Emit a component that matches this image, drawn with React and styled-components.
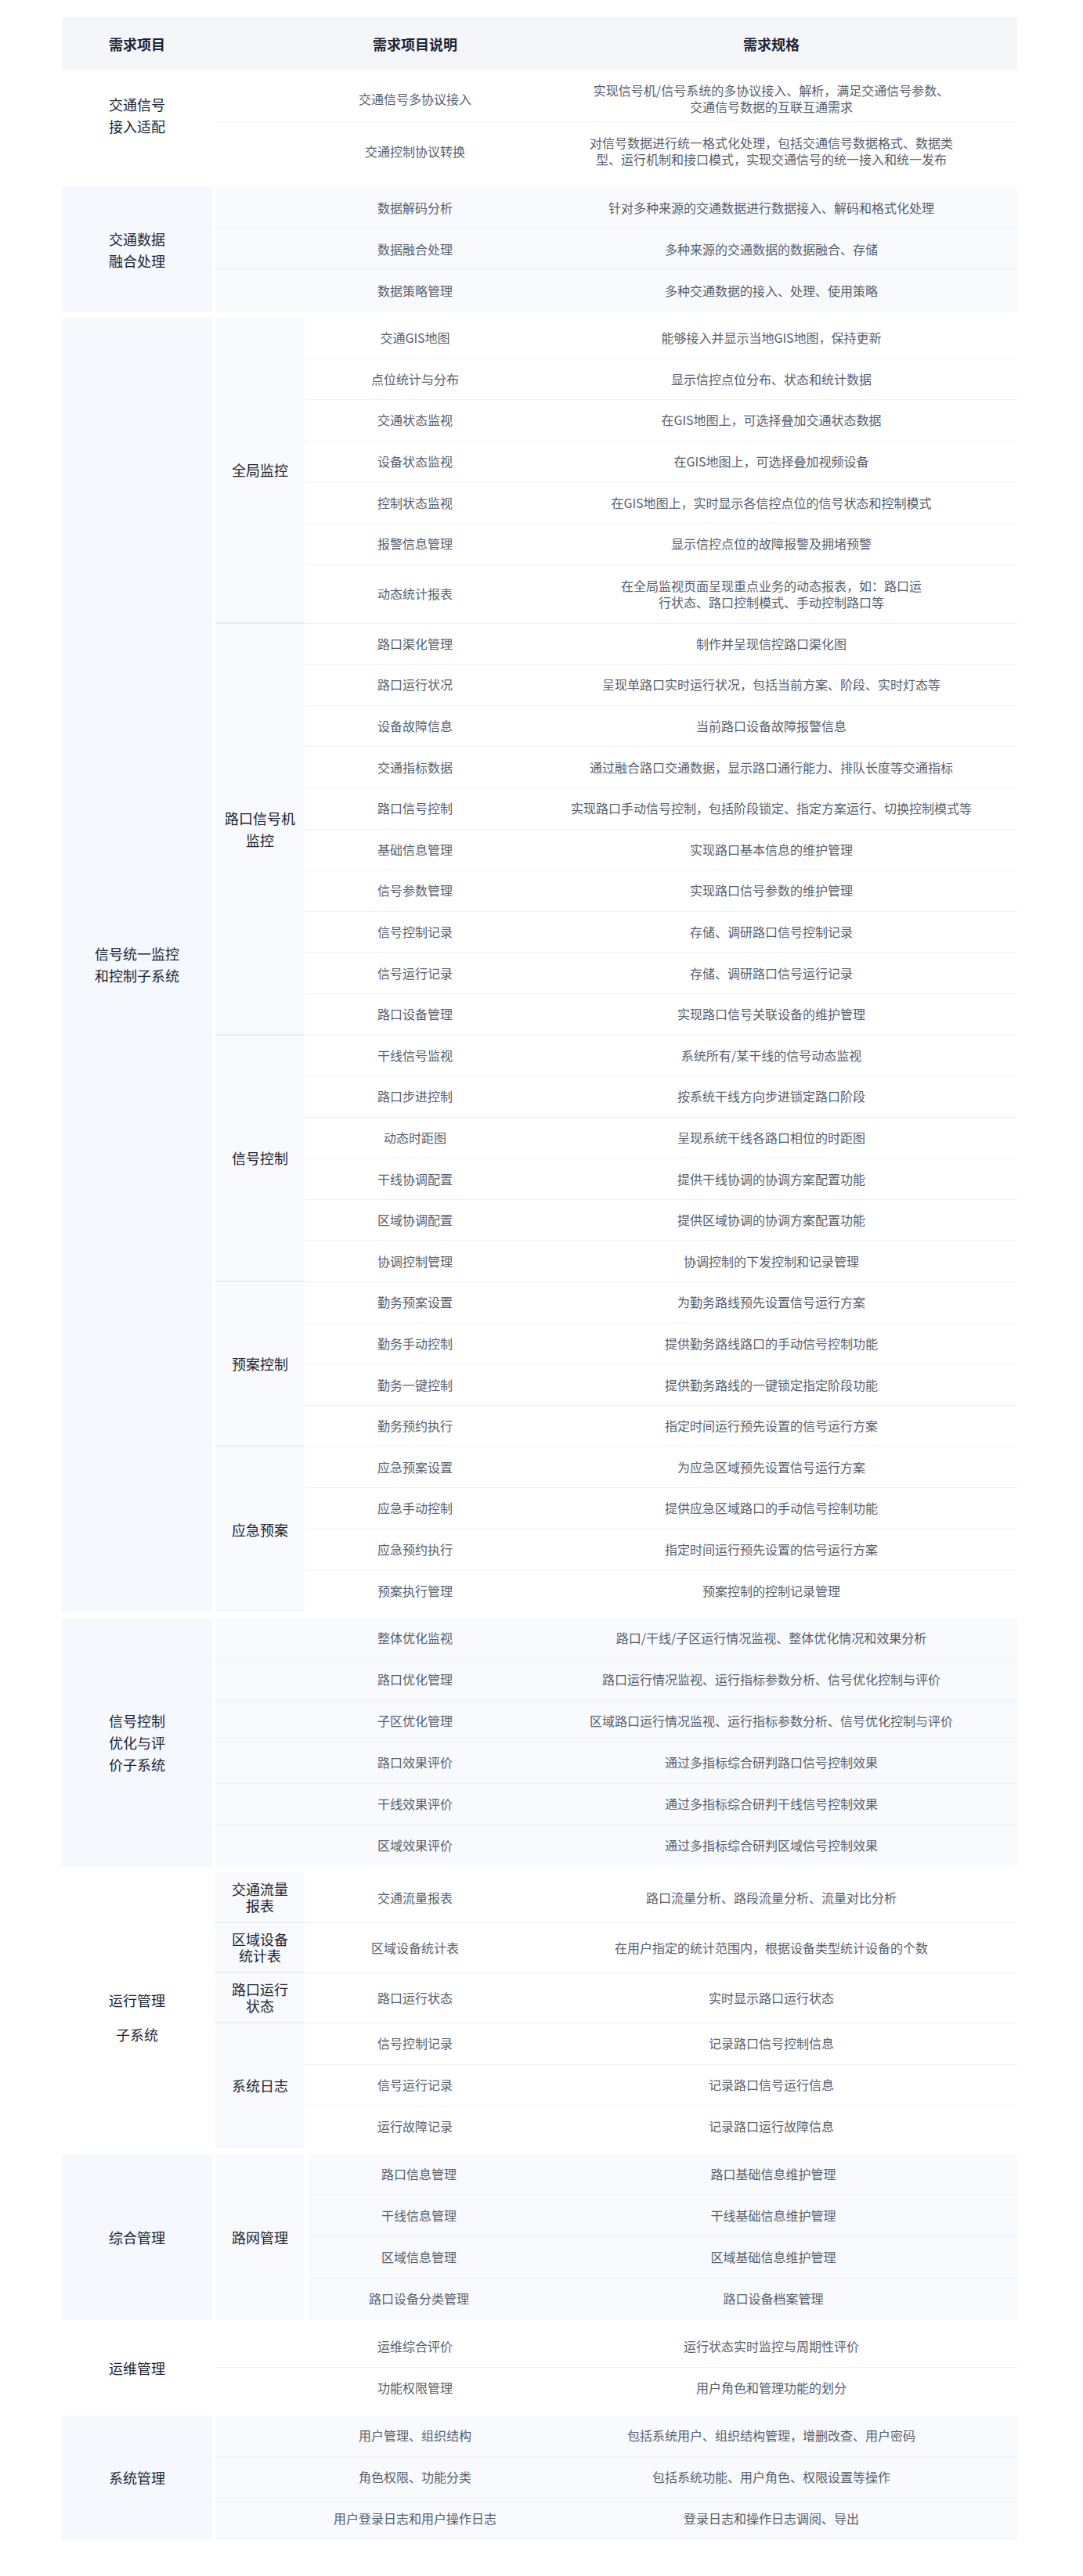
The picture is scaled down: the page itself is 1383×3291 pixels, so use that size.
import React from 'react'
import styled, { createGlobalStyle } from 'styled-components'

const sections = [
  {
    label: ['交通信号', '接入适配'],
    lift: true,
    groups: [{
      rows: [
        ['交通信号多协议接入', '实现信号机/信号系统的多协议接入、解析，满足交通信号参数、\n交通信号数据的互联互通需求'],
        ['交通控制协议转换', '对信号数据进行统一格式化处理，包括交通信号数据格式、数据类\n型、运行机制和接口模式，实现交通信号的统一接入和统一发布', true],
      ],
    }],
  },
  {
    label: ['交通数据', '融合处理'],
    tint: true,
    groups: [{
      rows: [
        ['数据解码分析', '针对多种来源的交通数据进行数据接入、解码和格式化处理'],
        ['数据融合处理', '多种来源的交通数据的数据融合、存储'],
        ['数据策略管理', '多种交通数据的接入、处理、使用策略'],
      ],
    }],
  },
  {
    label: ['信号统一监控', '和控制子系统'],
    labelTint: true,
    dense: true,
    groups: [
      {
        title: ['全局监控'],
        rows: [
          ['交通GIS地图', '能够接入并显示当地GIS地图，保持更新'],
          ['点位统计与分布', '显示信控点位分布、状态和统计数据'],
          ['交通状态监视', '在GIS地图上，可选择叠加交通状态数据'],
          ['设备状态监视', '在GIS地图上，可选择叠加视频设备'],
          ['控制状态监视', '在GIS地图上，实时显示各信控点位的信号状态和控制模式'],
          ['报警信息管理', '显示信控点位的故障报警及拥堵预警'],
          ['动态统计报表', '在全局监视页面呈现重点业务的动态报表，如：路口运\n行状态、路口控制模式、手动控制路口等', true],
        ],
      },
      {
        title: ['路口信号机', '监控'],
        rows: [
          ['路口渠化管理', '制作并呈现信控路口渠化图'],
          ['路口运行状况', '呈现单路口实时运行状况，包括当前方案、阶段、实时灯态等'],
          ['设备故障信息', '当前路口设备故障报警信息'],
          ['交通指标数据', '通过融合路口交通数据，显示路口通行能力、排队长度等交通指标'],
          ['路口信号控制', '实现路口手动信号控制，包括阶段锁定、指定方案运行、切换控制模式等'],
          ['基础信息管理', '实现路口基本信息的维护管理'],
          ['信号参数管理', '实现路口信号参数的维护管理'],
          ['信号控制记录', '存储、调研路口信号控制记录'],
          ['信号运行记录', '存储、调研路口信号运行记录'],
          ['路口设备管理', '实现路口信号关联设备的维护管理'],
        ],
      },
      {
        title: ['信号控制'],
        rows: [
          ['干线信号监视', '系统所有/某干线的信号动态监视'],
          ['路口步进控制', '按系统干线方向步进锁定路口阶段'],
          ['动态时距图', '呈现系统干线各路口相位的时距图'],
          ['干线协调配置', '提供干线协调的协调方案配置功能'],
          ['区域协调配置', '提供区域协调的协调方案配置功能'],
          ['协调控制管理', '协调控制的下发控制和记录管理'],
        ],
      },
      {
        title: ['预案控制'],
        rows: [
          ['勤务预案设置', '为勤务路线预先设置信号运行方案'],
          ['勤务手动控制', '提供勤务路线路口的手动信号控制功能'],
          ['勤务一键控制', '提供勤务路线的一键锁定指定阶段功能'],
          ['勤务预约执行', '指定时间运行预先设置的信号运行方案'],
        ],
      },
      {
        title: ['应急预案'],
        rows: [
          ['应急预案设置', '为应急区域预先设置信号运行方案'],
          ['应急手动控制', '提供应急区域路口的手动信号控制功能'],
          ['应急预约执行', '指定时间运行预先设置的信号运行方案'],
          ['预案执行管理', '预案控制的控制记录管理'],
        ],
      },
    ],
  },
  {
    label: ['信号控制', '优化与评', '价子系统'],
    tint: true,
    groups: [{
      rows: [
        ['整体优化监视', '路口/干线/子区运行情况监视、整体优化情况和效果分析'],
        ['路口优化管理', '路口运行情况监视、运行指标参数分析、信号优化控制与评价'],
        ['子区优化管理', '区域路口运行情况监视、运行指标参数分析、信号优化控制与评价'],
        ['路口效果评价', '通过多指标综合研判路口信号控制效果'],
        ['干线效果评价', '通过多指标综合研判干线信号控制效果'],
        ['区域效果评价', '通过多指标综合研判区域信号控制效果'],
      ],
    }],
  },
  {
    label: ['运行管理', '子系统'],
    spread: true,
    groups: [
      { title: ['交通流量', '报表'], tight: true, rows: [['交通流量报表', '路口流量分析、路段流量分析、流量对比分析']] },
      { title: ['区域设备', '统计表'], tight: true, rows: [['区域设备统计表', '在用户指定的统计范围内，根据设备类型统计设备的个数']] },
      { title: ['路口运行', '状态'], tight: true, rows: [['路口运行状态', '实时显示路口运行状态']] },
      {
        title: ['系统日志'],
        rows: [
          ['信号控制记录', '记录路口信号控制信息'],
          ['信号运行记录', '记录路口信号运行信息'],
          ['运行故障记录', '记录路口运行故障信息'],
        ],
      },
    ],
  },
  {
    label: ['综合管理'],
    tint: true,
    split: true,
    groups: [{
      title: ['路网管理'],
      rows: [
        ['路口信息管理', '路口基础信息维护管理'],
        ['干线信息管理', '干线基础信息维护管理'],
        ['区域信息管理', '区域基础信息维护管理'],
        ['路口设备分类管理', '路口设备档案管理'],
      ],
    }],
  },
  {
    label: ['运维管理'],
    groups: [{
      rows: [
        ['运维综合评价', '运行状态实时监控与周期性评价'],
        ['功能权限管理', '用户角色和管理功能的划分'],
      ],
    }],
  },
  {
    label: ['系统管理'],
    tint: true,
    groups: [{
      rows: [
        ['用户管理、组织结构', '包括系统用户、组织结构管理，增删改查、用户密码'],
        ['角色权限、功能分类', '包括系统功能、用户角色、权限设置等操作'],
        ['用户登录日志和用户操作日志', '登录日志和操作日志调阅、导出'],
      ],
    }],
  },
]

function App() {
  return (
    <>
      <GlobalStyle />
      <Table>
        <Head>
          <HeadCell $col={1}>需求项目</HeadCell>
          <HeadCell $col={3}>需求项目说明</HeadCell>
          <HeadCell $col={4}>需求规格</HeadCell>
        </Head>
        {sections.map((s, si) =>
          <Section key={si}>
            <Label $tint={s.tint || s.labelTint} $lift={s.lift} $spread={s.spread}>
              {s.label.map(l => <span key={l}>{l}</span>)}
            </Label>
            <Body>
              {s.groups.map((g, gi) => {
                const lastGroup = gi === s.groups.length - 1
                return (
                  <Group key={gi}>
                    {g.title &&
                      <SubLabel $last={lastGroup} $tight={g.tight} $split={s.split}>
                        {g.title.map(t => <span key={t}>{t}</span>)}
                      </SubLabel>
                    }
                    <Rows>
                      {g.rows.map((r, ri) =>
                        <Row
                          key={r[0]}
                          $tint={s.tint}
                          $tall={r[2]}
                          $dense={s.dense}
                          $offset={!g.title}
                          $last={lastGroup && ri === g.rows.length - 1}
                        >
                          <Cell>{r[0]}</Cell>
                          <Cell>{r[1]}</Cell>
                        </Row>
                      )}
                    </Rows>
                  </Group>
                )
              })}
            </Body>
          </Section>
        )}
      </Table>
    </>
  )
}

const GlobalStyle = createGlobalStyle`
*, *::before, *::after {
  box-sizing: border-box;
}
body {
  margin: 0;
  background: #fff;
  font-family: "Noto Sans CJK SC", "Noto Sans", sans-serif;
}
`

const Table = styled.div`
width: 1220px;
margin: 22px 0 48px 79px;
`

const Head = styled.div`
display: grid;
grid-template-columns: 192px 118px 282px 1fr;
align-items: center;
height: 67px;
background: #f4f6f9;
color: #1d2533;
font-size: 18px;
font-weight: 600;
`

const HeadCell = styled.div`
grid-column: ${({ $col }) => $col};
text-align: center;
`

const Section = styled.section`
display: flex;
margin-top: 8px;
`

const Label = styled.div`
width: 192px;
flex-shrink: 0;
display: flex;
flex-direction: column;
align-items: center;
justify-content: center;
padding-top: ${({ $spread }) => $spread ? 18 : 0}px;
padding-bottom: ${({ $lift }) => $lift ? 34 : 0}px;
background: ${({ $tint }) => $tint ? '#f5f8fc' : '#fff'};
color: #1d2533;
font-size: 18px;
line-height: ${({ $spread }) => $spread ? 44 : 28}px;
`

const Body = styled.div`
flex: 1;
margin-left: 4px;
display: flex;
flex-direction: column;
`

const Group = styled.div`
display: flex;
`

const SubLabel = styled.div`
width: 114px;
flex-shrink: 0;
margin-right: ${({ $split }) => $split ? 5 : 0}px;
display: flex;
flex-direction: column;
align-items: center;
justify-content: center;
padding: 10px 0;
background: #f8fafd;
border-bottom: ${({ $last }) => $last ? 'none' : '2px solid #eaedf2'};
color: #1d2533;
font-size: 18px;
line-height: ${({ $tight }) => $tight ? 21 : 28}px;
text-align: center;
`

const Rows = styled.div`
flex: 1;
display: flex;
flex-direction: column;
`

const Row = styled.div`
flex: 1;
display: grid;
grid-template-columns: 282px 1fr;
align-items: center;
min-height: ${({ $tall, $dense }) => $tall ? 75 : $dense ? 52.6 : 53}px;
padding: 8px 0 8px ${({ $offset }) => $offset ? 114 : 0}px;
background: ${({ $tint }) => $tint ? '#f8fafd' : '#fff'};
border-bottom: 1px solid ${({ $last, $tint }) => $last ? 'transparent' : $tint ? '#eef2f6' : '#eff1f4'};
`

const Cell = styled.div`
color: #56606e;
font-size: 16px;
line-height: 21px;
text-align: center;
white-space: pre-line;
`

export default App
